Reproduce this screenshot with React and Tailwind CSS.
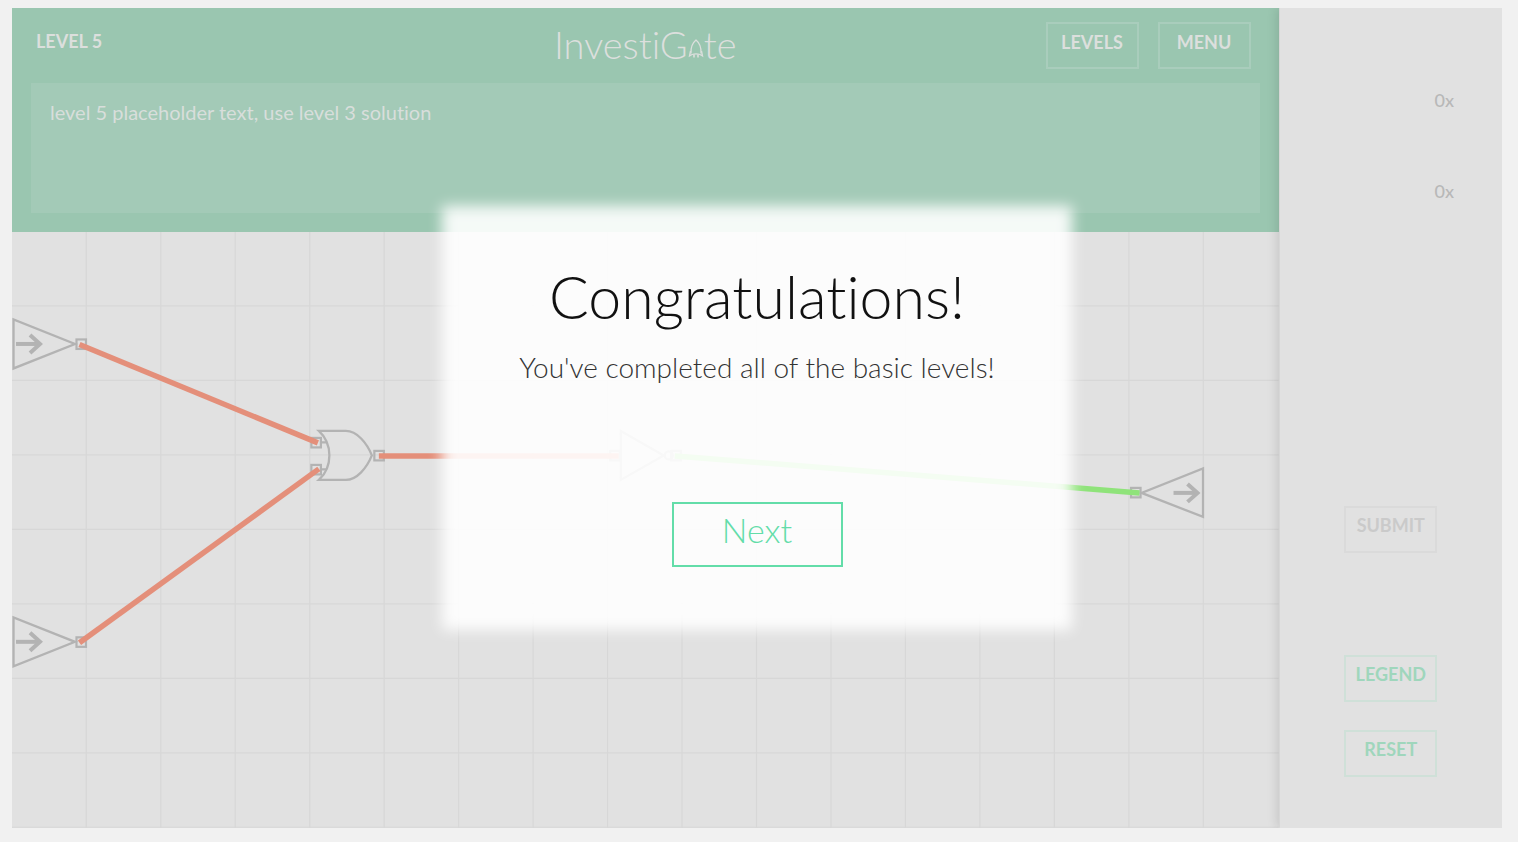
import React from "react";

const CELL = 74.5;
const COLS = Array.from({ length: 16 }, (_, i) => (i + 1) * CELL);
const ROWS = Array.from({ length: 7 }, (_, i) => (i + 1) * CELL);

function Port({ x, y }) {
  return <rect x={x - 4.5} y={y - 4.5} width="9.5" height="9.5" fill="none" stroke="#b3b3b3" strokeWidth="2.2" />;
}

function Arrow({ x, y }) {
  return (
    <g fill="none" stroke="#b3b3b3">
      <path d={`M${x} ${y}h24`} strokeWidth="4" />
      <path d={`M${x + 14} ${y - 9}l10 9l-10 9`} strokeWidth="4" />
    </g>
  );
}

function InputGate({ y }) {
  return (
    <g>
      <path d={`M1.5 ${y - 24.5}V${y + 24.5}L63 ${y}Z`} fill="none" stroke="#b3b3b3" strokeWidth="2.3" />
      <Arrow x={4} y={y} />
      <Port x={69} y={y} />
    </g>
  );
}

function Circuit() {
  return (
    <svg viewBox="0 0 1267 596" className="block w-full" role="img" aria-label="Circuit board">
      <g stroke="#d7d7d7" strokeWidth="1.2">
        {COLS.map((x) => (
          <line key={x} x1={x - 0.2} y1="0" x2={x - 0.2} y2="596" />
        ))}
        {ROWS.map((y) => (
          <line key={y} x1="0" y1={y - 0.5} x2="1267" y2={y - 0.5} />
        ))}
        <line x1="0" y1="595.5" x2="1267" y2="595.5" />
      </g>
      <InputGate y={112} />
      <InputGate y={410} />
      <g fill="none" stroke="#b3b3b3" strokeWidth="2.3">
        <path d="M307 199H334C345 199 355 211 360 223.500C355 236 345 248 334 248H307C321 235 321 212 307 199Z" />
        <path d="M309 210.500h6M309 237.500h6" />
        <path d="M609 199V248L652 223.500Z" />
        <circle cx="657" cy="223.500" r="4" />
        <path d="M1191.500 236.500V285L1130 261Z" />
      </g>
      <Port x={304} y={210.5} />
      <Port x={304} y={237.5} />
      <Port x={367} y={223.5} />
      <Port x={603} y={223.5} />
      <Port x={664} y={223.5} />
      <Port x={1124} y={260.5} />
      <Arrow x={1162} y={261} />
      <g fill="none" strokeWidth="5.500">
        <path d="M67.500 112.500L306 211" stroke="#e48f7a" />
        <path d="M67.500 411L307 237" stroke="#e48f7a" />
        <path d="M367 224H607" stroke="#e48f7a" />
        <path d="M663 224L1128 261" stroke="#8fe37a" />
      </g>
    </svg>
  );
}

function Logo() {
  return (
    <h1 aria-label="InvestiGate" className="flex items-baseline text-[38px] leading-[48px] font-light text-[#dcdfdd]">
      <span>InvestiG</span>
      <svg width="16" height="20" viewBox="0 0 16 20" fill="none" stroke="#dcdfdd" strokeWidth="1.300" aria-hidden="true">
        <path d="M3 14.500C2.500 8 5 3.500 8 1C11 3.500 13.500 8 13 14.500" />
        <path d="M2.500 12L1.500 17L4 15.500C7 14.500 9 14.500 12 15.500L14.500 17L13.500 12" />
        <path d="M6 15.500V18.500M10 15.500V18.500" strokeWidth="1.600" />
      </svg>
      <span>te</span>
    </h1>
  );
}

function BoardButton({ className, children }) {
  return (
    <button type="button" className={`h-[47px] w-[93px] border-2 pb-2 text-lg leading-6 font-bold ${className}`}>
      {children}
    </button>
  );
}

export default function App() {
  return (
    <div className="min-h-screen bg-[#f1f1f1] pt-2 pr-4 pb-3 pl-3 font-['Lato',sans-serif] [font-variant-ligatures:none]">
      <main className="relative grid grid-cols-[17fr_3fr] bg-[#e1e1e1]">
        <div>
          <header className="h-56 bg-[#9ac6b0] px-[19px]">
            <div className="grid h-[75px] grid-cols-[1fr_auto_1fr] items-start">
              <p className="pt-[21px] pl-[5px] text-lg leading-6 font-bold text-[#dcdfdd]">LEVEL 5</p>
              <div className="pt-3">
                <Logo />
              </div>
              <nav className="flex justify-end gap-[19px] pt-3.5 pr-[9px]">
                <BoardButton className="border-[#a9cdbc] text-[#dcdfdd]">LEVELS</BoardButton>
                <BoardButton className="border-[#a9cdbc] text-[#dcdfdd]">MENU</BoardButton>
              </nav>
            </div>
            <p className="h-[130px] bg-[#a3cab7] px-[19px] pt-[15px] text-xl leading-7 text-[#d8dedb]">
              level 5 placeholder text, use level 3 solution
            </p>
          </header>
          <Circuit />
        </div>

        <aside className="flex flex-col items-center border-l border-[#d6d6d6] pt-20 shadow-[-2px_0_10px_rgba(0,0,0,0.120)] [clip-path:inset(0_0_0_-16px)]">
          <div className="flex w-full flex-col gap-[67px] pr-12 text-right text-lg leading-6 font-medium text-[#b8b8b8]">
            <span>0x</span>
            <span>0x</span>
          </div>
          <div className="mt-auto mb-[51px] flex flex-col gap-7">
            <BoardButton className="mb-[74px] border-[#dadada] text-[#cacaca]">SUBMIT</BoardButton>
            <BoardButton className="border-[#cfe0d8] text-[#9fd6bc]">LEGEND</BoardButton>
            <BoardButton className="border-[#cfe0d8] text-[#9fd6bc]">RESET</BoardButton>
          </div>
        </aside>

        <div className="absolute inset-0 flex items-center justify-center">
          <section role="dialog" aria-labelledby="done-title" className="relative h-[424px] w-[630px]">
            <div className="absolute inset-0 bg-white/90 blur-[7px]" />
            <div className="relative flex flex-col items-center pt-[55px]">
              <h2 id="done-title" className="text-[59px] leading-[72px] font-light text-[#111111]">
                Congratulations!
              </h2>
              <p className="mt-4 text-[28px] leading-9 font-light text-[#333333]">
                You've completed all of the basic levels!
              </p>
              <button
                type="button"
                className="mt-[117px] h-[65px] w-[171px] border-2 border-[#63dda9] pb-2 text-[34px] leading-10 font-light text-[#63dda9]"
              >
                Next
              </button>
            </div>
          </section>
        </div>
      </main>
    </div>
  );
}
